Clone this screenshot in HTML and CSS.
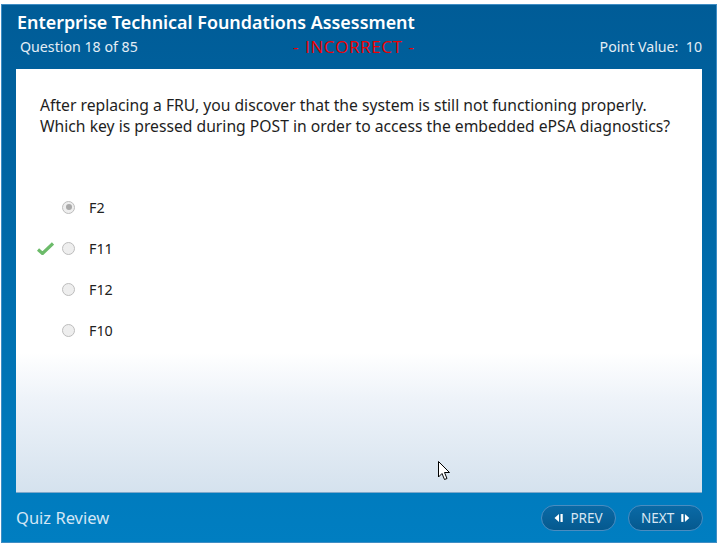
FILE: index.html
```html
<!DOCTYPE html>
<html>
<head>
<meta charset="utf-8">
<link rel="stylesheet" href="styles.css">
</head>
<body>
<div class="frame">
  <header class="head">
    <h1 class="title">Enterprise Technical Foundations Assessment</h1>
    <div class="subrow">
      <span class="qnum">Question 18 of 85</span>
      <span class="status">- INCORRECT -</span>
      <span class="points">Point Value:&nbsp; 10</span>
    </div>
  </header>
  <main class="panel">
    <p class="question">After replacing a FRU, you discover that the system is still not functioning properly.<br>Which key is pressed during POST in order to access the embedded ePSA diagnostics?</p>
    <ul class="options">
      <li class="opt"><span class="mark"></span><span class="radio checked"></span><span class="label">F2</span></li>
      <li class="opt"><span class="mark"><svg width="17" height="13" viewBox="0 0 17 13"><path d="M1 7.5 L5.5 11.5 L16 1.5" fill="none" stroke="#6cbb6a" stroke-width="3.2" stroke-linejoin="miter"/></svg></span><span class="radio"></span><span class="label">F11</span></li>
      <li class="opt"><span class="mark"></span><span class="radio"></span><span class="label">F12</span></li>
      <li class="opt"><span class="mark"></span><span class="radio"></span><span class="label">F10</span></li>
    </ul>
    <svg class="cursor" width="13" height="20" viewBox="0 0 13 20"><path d="M0.5 0.5 V16 L4 12.5 L6.5 18.5 L9 17.5 L6.5 11.5 L11.5 11.5 Z" fill="#fff" stroke="#000" stroke-width="1"/></svg>
  </main>
  <footer class="foot">
    <span class="review">Quiz Review</span>
    <div class="nav">
      <button class="btn"><svg width="10" height="10" viewBox="0 0 10 10"><path d="M5 1 L0.5 5 L5 9 Z" fill="#fff"/><rect x="6.5" y="1" width="2.2" height="8" fill="#fff"/></svg>PREV</button>
      <button class="btn">NEXT<svg width="10" height="10" viewBox="0 0 10 10"><rect x="1.3" y="1" width="2.2" height="8" fill="#fff"/><path d="M5 1 L9.5 5 L5 9 Z" fill="#fff"/></svg></button>
    </div>
  </footer>
</div>
</body>
</html>
```

FILE: styles.css
```css
html, body {
  margin: 0;
  padding: 0;
  background: #ffffff;
}
body {
  padding: 4px 0 0 1px;
  width: 720px;
  height: 544px;
  box-sizing: border-box;
  font-family: "Noto Sans", "Open Sans", sans-serif;
}
.frame {
  width: 716px;
  height: 539px;
  box-sizing: border-box;
  border: 1px solid #3f8dc4;
  background: linear-gradient(to bottom, #005c97 0%, #0064a2 30%, #0079bb 80%, #007ec1 100%);
  display: flex;
  flex-direction: column;
}
.head {
  padding: 5px 14px 0 15px;
  height: 64px;
  box-sizing: border-box;
  color: #fff;
}
.title {
  margin: 0;
  font-size: 17.9px;
  font-weight: 600;
  line-height: 25px;
  letter-spacing: 0;
}
.subrow {
  display: flex;
  align-items: center;
  height: 22px;
  font-size: 14.2px;
  font-weight: 400;
  position: relative;
}
.qnum {
  padding-left: 3px;
  color: #e3edf5;
}
.status {
  position: absolute;
  left: 276px;
  color: #f00000;
  font-family: "Open Sans", sans-serif;
  font-size: 17px;
  letter-spacing: 0.6px;
  word-spacing: 1px;
}
.points {
  margin-left: auto;
  color: #e3edf5;
}
.panel {
  position: relative;
  margin: 0 14px 0 14px;
  height: 424px;
  box-sizing: border-box;
  background: linear-gradient(to bottom, #ffffff 0%, #ffffff 67%, #eef3f9 78%, #d5e2ee 100%);
  border-bottom: 1px solid #7da8cb;
  padding: 26px 20px 0 24px;
}
.question {
  margin: 0;
  font-size: 15.7px;
  line-height: 21px;
  color: #1e1e1e;
}
.options {
  list-style: none;
  margin: 61px 0 0 0;
  padding: 0;
  display: flex;
  flex-direction: column;
  gap: 23px;
}
.opt {
  display: flex;
  align-items: center;
  height: 18px;
}
.mark {
  width: 22px;
  height: 14px;
  margin-left: -3px;
  display: flex;
  align-items: center;
}
.radio {
  width: 11px;
  height: 11px;
  border-radius: 50%;
  border: 1px solid #bdbdbd;
  background: #eeeeee;
  margin-left: 3px;
  position: relative;
}
.radio.checked::after {
  content: "";
  position: absolute;
  left: 2.5px;
  top: 2.5px;
  width: 6px;
  height: 6px;
  border-radius: 50%;
  background: #a9a9a9;
}
.label {
  margin-left: 14px;
  font-size: 14.3px;
  color: #222;
}
.cursor {
  position: absolute;
  left: 422px;
  top: 392px;
}
.foot {
  flex: 1;
  display: flex;
  align-items: center;
  padding: 0 13px 0 14px;
}
.review {
  color: #d3e6f5;
  font-size: 16.5px;
  font-weight: 400;
}
.nav {
  margin-left: auto;
  display: flex;
  gap: 12px;
}
.btn {
  height: 26px;
  box-sizing: border-box;
  border: 1px solid #4a8cc0;
  border-radius: 13px;
  background: linear-gradient(to bottom, #0a6aa6, #05598f);
  color: #d7e6f3;
  font-family: "Noto Sans", sans-serif;
  font-size: 13.5px;
  padding: 0 12px;
  display: flex;
  align-items: center;
  gap: 6px;
  width: 75px;
  justify-content: center;
}
```
